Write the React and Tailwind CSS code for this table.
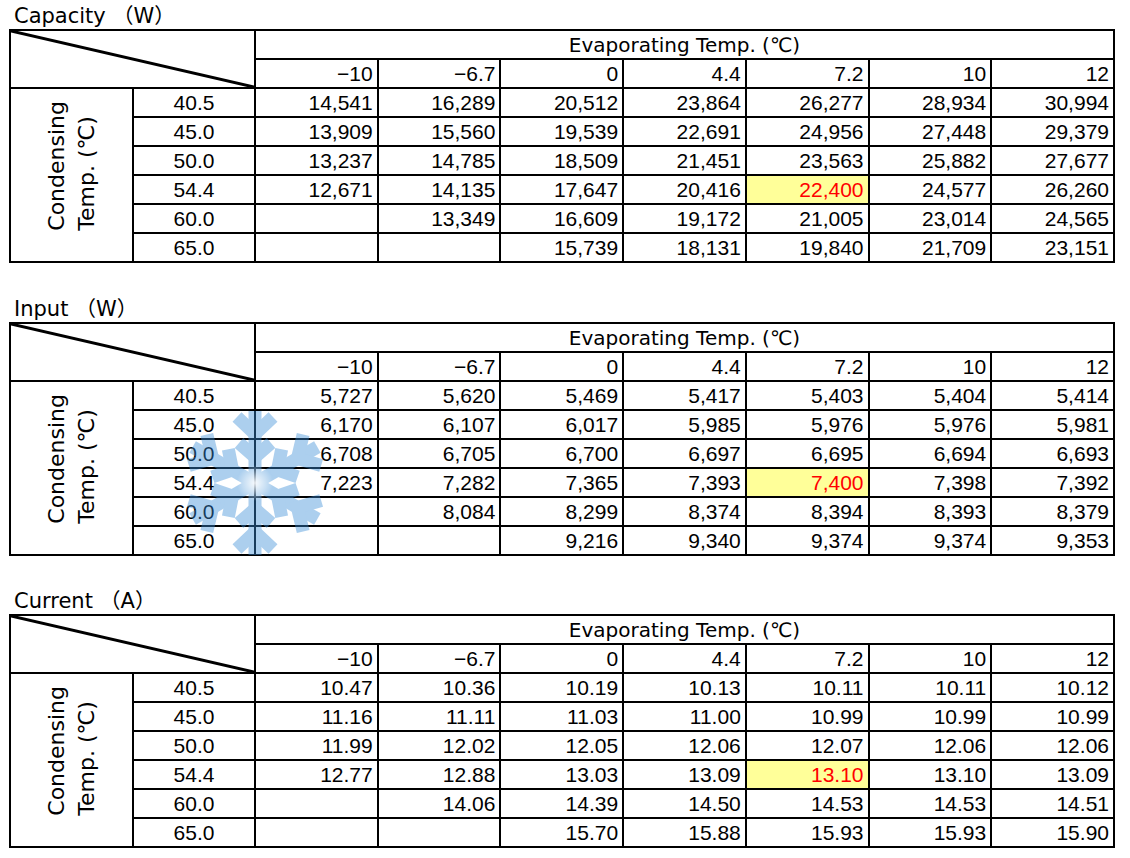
import React from "react";

const COLS = ["−10", "−6.7", "0", "4.4", "7.2", "10", "12"];
const ROWS = ["40.5", "45.0", "50.0", "54.4", "60.0", "65.0"];

const TABLES = [
  {
    title: "Capacity",
    unit: "W",
    data: [
      ["14,541", "16,289", "20,512", "23,864", "26,277", "28,934", "30,994"],
      ["13,909", "15,560", "19,539", "22,691", "24,956", "27,448", "29,379"],
      ["13,237", "14,785", "18,509", "21,451", "23,563", "25,882", "27,677"],
      ["12,671", "14,135", "17,647", "20,416", "22,400", "24,577", "26,260"],
      ["", "13,349", "16,609", "19,172", "21,005", "23,014", "24,565"],
      ["", "", "15,739", "18,131", "19,840", "21,709", "23,151"],
    ],
  },
  {
    title: "Input",
    unit: "W",
    data: [
      ["5,727", "5,620", "5,469", "5,417", "5,403", "5,404", "5,414"],
      ["6,170", "6,107", "6,017", "5,985", "5,976", "5,976", "5,981"],
      ["6,708", "6,705", "6,700", "6,697", "6,695", "6,694", "6,693"],
      ["7,223", "7,282", "7,365", "7,393", "7,400", "7,398", "7,392"],
      ["", "8,084", "8,299", "8,374", "8,394", "8,393", "8,379"],
      ["", "", "9,216", "9,340", "9,374", "9,374", "9,353"],
    ],
  },
  {
    title: "Current",
    unit: "A",
    data: [
      ["10.47", "10.36", "10.19", "10.13", "10.11", "10.11", "10.12"],
      ["11.16", "11.11", "11.03", "11.00", "10.99", "10.99", "10.99"],
      ["11.99", "12.02", "12.05", "12.06", "12.07", "12.06", "12.06"],
      ["12.77", "12.88", "13.03", "13.09", "13.10", "13.10", "13.09"],
      ["", "14.06", "14.39", "14.50", "14.53", "14.53", "14.51"],
      ["", "", "15.70", "15.88", "15.93", "15.93", "15.90"],
    ],
  },
];

// rated point: 54.4 condensing / 7.2 evaporating
const HI_ROW = 3;
const HI_COL = 4;

function Diagonal() {
  return (
    <svg
      className="absolute inset-0 h-full w-full"
      viewBox="0 0 100 100"
      preserveAspectRatio="none"
    >
      <line
        x1="0"
        y1="0"
        x2="100"
        y2="100"
        stroke="black"
        strokeWidth="3"
        vectorEffect="non-scaling-stroke"
      />
    </svg>
  );
}

function Snowflake() {
  return (
    <svg
      className="pointer-events-none absolute left-[183px] top-[111px] h-[150px] w-[144px]"
      viewBox="-72 -75 144 150"
    >
      <defs>
        <radialGradient id="glow">
          <stop offset="0%" stopColor="white" stopOpacity="0.9" />
          <stop offset="100%" stopColor="white" stopOpacity="0" />
        </radialGradient>
      </defs>
      <g opacity="0.42" stroke="#3b8ed8" strokeWidth="13" fill="none">
        {[0, 60, 120, 180, 240, 300].map((a) => (
          <g key={a} transform={`rotate(${a})`}>
            <line x1="0" y1="0" x2="0" y2="-72" />
            <polyline points="-18,-66 0,-49 18,-66" />
            <polyline points="-16,-40 0,-26 16,-40" />
          </g>
        ))}
      </g>
      <circle cx="0" cy="0" r="18" fill="url(#glow)" />
    </svg>
  );
}

function DataTable({ title, unit, data, snow }) {
  return (
    <div className="relative">
      <div className="h-[25px] pl-[14px] font-['DejaVu_Sans','Noto_Sans_CJK_JP',sans-serif] text-[21px] leading-[25px]">
        {title} （{unit}）
      </div>
      <table className="ml-[9px] w-[1106px] table-fixed border-collapse border-2 border-black font-['Liberation_Sans',Arial,sans-serif] text-[21px] leading-[24px] text-black">
        <colgroup>
          <col className="w-[123px]" />
          <col className="w-[122px]" />
          {COLS.map((c) => (
            <col key={c} />
          ))}
        </colgroup>
        <thead>
          <tr className="h-[29px]">
            <td colSpan={2} rowSpan={2} className="relative border-2 border-black p-0">
              <Diagonal />
            </td>
            <td
              colSpan={7}
              className="border-2 border-black p-0 text-center font-['DejaVu_Sans','Noto_Sans_CJK_JP',sans-serif] text-[20px] font-normal"
            >
              Evaporating Temp. (℃)
            </td>
          </tr>
          <tr className="h-[29px]">
            {COLS.map((c) => (
              <td key={c} className="border-2 border-black p-0 pr-[4px] text-right">
                {c}
              </td>
            ))}
          </tr>
        </thead>
        <tbody>
          {ROWS.map((r, i) => (
            <tr key={r} className="h-[29px]">
              {i === 0 && (
                <td rowSpan={6} className="border-2 border-black p-0 pb-[30px] align-bottom">
                  <div className="flex justify-center">
                    <div className="rotate-180 whitespace-nowrap font-['DejaVu_Sans','Noto_Sans_CJK_JP',sans-serif] text-[22px] leading-[30px] [text-orientation:sideways] [writing-mode:vertical-rl]">
                      Condensing
                      <br />
                      Temp. (℃)
                    </div>
                  </div>
                </td>
              )}
              <td className="border-2 border-black p-0 text-center">{r}</td>
              {data[i].map((v, j) =>
                i === HI_ROW && j === HI_COL ? (
                  <td key={j} className="border-2 border-black bg-[#ffff99] p-0 pr-[4px] text-right text-[#ff0000]">
                    {v}
                  </td>
                ) : (
                  <td key={j} className="border-2 border-black p-0 pr-[4px] text-right">
                    {v}
                  </td>
                )
              )}
            </tr>
          ))}
        </tbody>
      </table>
      {snow && <Snowflake />}
    </div>
  );
}

export default function App() {
  return (
    <div className="min-h-screen w-[1130px] bg-white pt-[4px]">
      <DataTable {...TABLES[0]} />
      <div className="mt-[34px]">
        <DataTable {...TABLES[1]} snow />
      </div>
      <div className="mt-[33px]">
        <DataTable {...TABLES[2]} />
      </div>
    </div>
  );
}
